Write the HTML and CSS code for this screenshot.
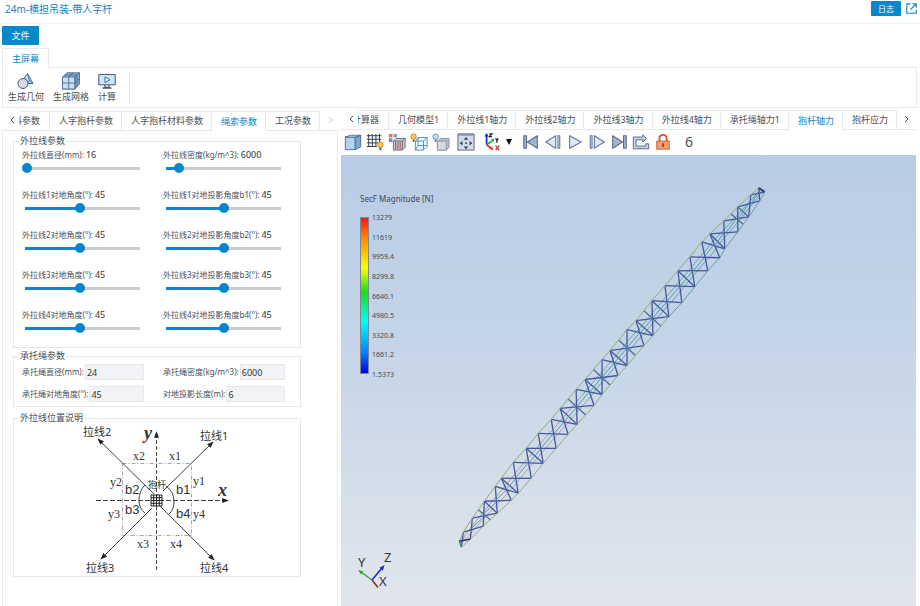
FILE: index.html
```html
<!DOCTYPE html>
<html lang="zh">
<head>
<meta charset="utf-8">
<title>24m-横担吊装-带人字杆</title>
<link rel="stylesheet" href="styles.css">
</head>
<body>
<header class="topbar">
  <h1>24m-横担吊装-带人字杆</h1>
  <button class="primary log">日志</button>
  <a class="open" href="#" aria-label="打开"><svg width="11" height="11" viewBox="0 0 11 11" fill="none" stroke="#1684c4" stroke-width="1.1"><path d="M4.500.900H.8v9.300h9.400V6.500M6.200.8h4v4M10 1 4.500 6.500"/></svg></a>
</header>

<nav class="menu"><button class="primary file">文件</button></nav>
<div class="ribbon-tabs"><button class="ribbon-tab">主屏幕</button></div>
<section class="ribbon">
  <button class="tool"><svg width="18" height="18" viewBox="0 0 18 18" stroke="#4c5666"><path d="m10.500 1.500 5.500 10H9l-2-5z" fill="#b9dcf5" stroke="#3f6e9c"/><path d="m10.500 1.500 2 7.500L16 11.500M12.500 9 9 11.500" fill="none" stroke="#3f6e9c" stroke-width=".8"/><circle cx="6" cy="11.500" r="5" fill="#d9dde3"/></svg><span>生成几何</span></button>
  <button class="tool"><svg width="20" height="18" viewBox="0 0 20 18" stroke="#4d6a8a" stroke-width=".9"><path d="M1.500 5 6 .8h12.500V12L14 17H1.500z" fill="#8eb2d4"/><path d="M1.500 5H14v12H1.500z" fill="#c7e2f6"/><path d="M1.500 11H14l4.500-4.600M7.700 17V5L12 .8M14 5 18.500.8M14 5v12M3.700 3h12.500v11.500" fill="none"/></svg><span>生成网格</span></button>
  <button class="tool"><svg width="18" height="18" viewBox="0 0 18 18" stroke="#4c5666"><path d="M.8 2.500h16.400v10.300H.8z" fill="#cfe6f7"/><path d="m7 5 5 2.700-5 2.700z" fill="#fff" stroke="#2f6698"/><path d="M7 13v2.500h4V13M4.500 16h9" fill="none" stroke-width="1.300"/></svg><span>计算</span></button>
  <i class="divider"></i>
</section>

<main class="work">
  <section class="params">
    <div class="tabs" role="tablist">
      <button class="arrow" aria-label="向左"><svg width="5" height="8" viewBox="0 0 5 8"><path d="M4 1 1 4l3 3"/></svg></button>
      <button class="tab cut" role="tab"><span>材料参数</span></button>
      <button class="tab" role="tab">人字抱杆参数</button>
      <button class="tab" role="tab">人字抱杆材料参数</button>
      <button class="tab active" role="tab" aria-selected="true">绳索参数</button>
      <button class="tab" role="tab">工况参数</button>
      <button class="arrow dim" aria-label="向右"><svg width="5" height="8" viewBox="0 0 5 8"><path d="m1 1 3 3-3 3"/></svg></button>
    </div>
    <div class="panel">
      <fieldset class="guys">
        <legend>外拉线参数</legend>
        <div class="field"><label for="d">外拉线直径(mm):</label><output for="d">16</output><input id="d" type="range" max="100" value="0" style="--fill:0%"></div>
        <div class="field"><label for="p">外拉线密度(kg/m^3):</label><output for="p">6000</output><input id="p" type="range" max="100" value="10" style="--fill:10%"></div>
        <div class="field"><label for="a1">外拉线1对地角度(°):</label><output for="a1">45</output><input id="a1" type="range" max="95" value="45" style="--fill:47%"></div>
        <div class="field"><label for="b1">外拉线1对地投影角度b1(°):</label><output for="b1">45</output><input id="b1" type="range" max="90" value="45" style="--fill:50%"></div>
        <div class="field"><label for="a2">外拉线2对地角度(°):</label><output for="a2">45</output><input id="a2" type="range" max="95" value="45" style="--fill:47%"></div>
        <div class="field"><label for="b2">外拉线2对地投影角度b2(°):</label><output for="b2">45</output><input id="b2" type="range" max="90" value="45" style="--fill:50%"></div>
        <div class="field"><label for="a3">外拉线3对地角度(°):</label><output for="a3">45</output><input id="a3" type="range" max="95" value="45" style="--fill:47%"></div>
        <div class="field"><label for="b3">外拉线3对地投影角度b3(°):</label><output for="b3">45</output><input id="b3" type="range" max="90" value="45" style="--fill:50%"></div>
        <div class="field"><label for="a4">外拉线4对地角度(°):</label><output for="a4">45</output><input id="a4" type="range" max="95" value="45" style="--fill:47%"></div>
        <div class="field"><label for="b4">外拉线4对地投影角度b4(°):</label><output for="b4">45</output><input id="b4" type="range" max="90" value="45" style="--fill:50%"></div>
      </fieldset>
      <fieldset class="slings">
        <legend>承托绳参数</legend>
        <div class="entry"><label for="s1">承托绳直径(mm):</label><input id="s1" type="text" value="24"></div>
        <div class="entry"><label for="s2">承托绳密度(kg/m^3):</label><input id="s2" type="text" value="6000"></div>
        <div class="entry"><label for="s3">承托绳对地角度(°):</label><input id="s3" type="text" value="45"></div>
        <div class="entry"><label for="s4">对地投影长度(m):</label><input id="s4" type="text" value="6"></div>
      </fieldset>
      <fieldset class="layout">
        <legend>外拉线位置说明</legend>
        <svg class="plan" viewBox="14 425 286 152">
          <defs><marker id="tip" markerUnits="userSpaceOnUse" viewBox="0 0 8 6" refX="7" refY="3" markerWidth="7" markerHeight="5" orient="auto"><path d="M0 0 8 3 0 6z" fill="#222"/></marker></defs>
          <path d="M122.500 464.500h69v72h-69z" fill="none" stroke="#8a8f95" stroke-width=".8" stroke-dasharray="4 2 1 2"/>
          <g stroke="#444" fill="none">
            <path d="M156.500 571V433" stroke-dasharray="4 2" marker-end="url(#tip)"/>
            <path d="M96 501.500h132" stroke-dasharray="5 2" marker-end="url(#tip)"/>
            <path d="m154 495-56-55" marker-end="url(#tip)"/>
            <path d="m163 492 50-49" marker-end="url(#tip)"/>
            <path d="m152 509-51 51" marker-end="url(#tip)"/>
            <path d="m160 507 54 54" marker-end="url(#tip)"/>
            <path d="M145 486q-6 6-6 15t6 13M166 487q8 6 8 15t-5 13"/>
          </g>
          <path d="M151 496h11v11h-11z" fill="#fff" stroke="#222"/>
          <path d="M153.700 496v11m2.800-11v11m2.800-11v11M151 498.700h11m-11 2.800h11m-11 2.800h11" stroke="#222"/>
          <g class="cjk"><text x="83" y="437">拉线2</text><text x="200" y="441">拉线1</text><text x="86" y="573">拉线3</text><text x="200" y="573">拉线4</text></g>
          <text class="mast" x="148" y="489">抱杆</text>
          <g class="angle"><text x="125" y="495">b2</text><text x="176" y="495">b1</text><text x="125" y="515">b3</text><text x="176" y="519">b4</text></g>
          <g class="dist"><text x="133" y="461">x2</text><text x="169" y="461">x1</text><text x="110" y="487">y2</text><text x="193" y="486">y1</text><text x="108" y="519">y3</text><text x="193" y="519">y4</text><text x="137" y="549">x3</text><text x="170" y="549">x4</text></g>
          <g class="axis"><text x="144" y="440">y</text><text x="218" y="497">x</text></g>
        </svg>
      </fieldset>
    </div>
  </section>

  <section class="viewer">
    <div class="tabs" role="tablist">
      <button class="arrow" aria-label="向左"><svg width="5" height="8" viewBox="0 0 5 8"><path d="M4 1 1 4l3 3"/></svg></button>
      <button class="tab cut" role="tab"><span>计算器</span></button>
      <button class="tab" role="tab">几何模型1</button>
      <button class="tab" role="tab">外拉线1轴力</button>
      <button class="tab" role="tab">外拉线2轴力</button>
      <button class="tab" role="tab">外拉线3轴力</button>
      <button class="tab" role="tab">外拉线4轴力</button>
      <button class="tab" role="tab">承托绳轴力1</button>
      <button class="tab active" role="tab" aria-selected="true">抱杆轴力</button>
      <button class="tab" role="tab">抱杆应力</button>
      <button class="arrow" aria-label="向右"><svg width="5" height="8" viewBox="0 0 5 8"><path d="m1 1 3 3-3 3"/></svg></button>
    </div>
    <div class="toolbar">
      <button aria-label="实体"><svg viewBox="0 0 20 20"><path d="M1.500 4.500h11v14h-11z" fill="#b5d3ee" stroke="#46688a"/><path d="m12.500 4.500 6-2v13l-6 3z" fill="#7ea8d0" stroke="#46688a"/><path d="m1.500 4.500 6-2h11l-6 2z" fill="#dcecf8" stroke="#46688a"/></svg></button>
      <button aria-label="网格"><svg viewBox="0 0 20 20"><path d="M3 1v14M7 1v14M11 1v14M15 1v9M1 3h16M1 7h16M1 11h13M1 15h11" stroke="#344252" stroke-width="1.100"/><circle cx="16" cy="13" r="3" fill="#ffc94d" stroke="#c9892b"/><path d="M14.700 16h2.600v3h-2.600z" fill="#66707c"/></svg></button>
      <button aria-label="颜色"><svg viewBox="0 0 20 20"><path d="M1 1h4v4H1z" fill="#e8754f"/><path d="M6 1h4v4H6z" fill="#7ba7d5"/><path d="M1 6h4v4H1z" fill="#6589bd"/><path d="m6 9 3-3h10v10l-3 3H6z" fill="#c9ced6" stroke="#5d6470"/><path d="M6 9h10v10M16 9l3-3" fill="none" stroke="#5d6470"/><path d="M8.500 10v8m2.500-8v8m2.500-8v8" stroke="#a95350" stroke-width="1.200"/></svg></button>
      <button aria-label="线框"><svg viewBox="0 0 20 20"><path d="m6 9 3-4h10v10l-4 4H6zM6 9h9v10M15 9l4-4M9 5v9h10M9 14l-3 5" fill="#e6f3fc" stroke="#3b8cc4" fill-opacity=".5"/><circle cx="4" cy="4" r="3" fill="#ffc94d" stroke="#c9892b"/><path d="M3 7h2v3H3z" fill="#66707c"/></svg></button>
      <button aria-label="面"><svg viewBox="0 0 20 20"><path d="m6 9 3-3h10v10l-3 3H6z" fill="#b5bcc6" stroke="#8b939f"/><path d="M6 9h10v10H6z" fill="#d5d9df" stroke="#8b939f"/><circle cx="4" cy="4" r="3" fill="#bfe3fa" stroke="#4a92c8"/><path d="M3 7h2v3H3z" fill="#66707c"/></svg></button>
      <button class="fit" aria-label="适合窗口"><svg viewBox="0 0 20 20"><path d="M1 1h18v18H1z" fill="#cfdaea" stroke="#59606c"/><path d="M1 1h18v2H1z" fill="#8691a3"/><path d="M10 4.500 7.500 7.500h5zM10 18l-2.500-3h5zM3 11.300l3-2.500v5zM17 11.300l-3-2.500v5z" fill="#2e3e55"/><circle cx="10" cy="11.300" r="1" fill="#2e3e55"/></svg></button>
      <button class="view" aria-label="视图方向"><svg viewBox="0 0 20 20"><path d="M4 13V3" stroke="#1736c8" stroke-width="2"/><path d="m4 13 7-5" stroke="#26b24a" stroke-width="2"/><path d="m4 13 5 4" stroke="#e03328" stroke-width="2"/><path d="M1.500 4 4 0l2.500 4z" fill="#1736c8"/><path d="m9 7 4-.8-1.700 4z" fill="#26b24a"/><path d="m7.600 18 4 .8-1.600-4z" fill="#e03328"/><path d="M7 1h3L7 4h3M14 6l1.500 2.500V11m0-2.500L17 6" fill="none" stroke="#222" stroke-width="1.300"/><path d="m14 14 4 5m0-5-4 5" stroke="#c22b22" stroke-width="1.300"/></svg></button>
      <button class="caret" aria-label="更多视图"><svg viewBox="0 0 8 8"><path d="M1 1h6L4 7z" fill="#111"/></svg></button>
      <button aria-label="首帧"><svg viewBox="0 0 20 20"><path d="M2 3h3v14H2zM17 3v14L6 10z" fill="#a7b3cb" stroke="#5c6b8c" stroke-width="1.200"/></svg></button>
      <button aria-label="上一帧"><svg viewBox="0 0 20 20"><path d="M13 3v14L2 10zM15.500 3h2v14h-2z" fill="#dfe7f3" stroke="#6577a0" stroke-width="1.200"/></svg></button>
      <button aria-label="播放"><svg viewBox="0 0 20 20"><path d="m4 3 13 7-13 7z" fill="#dfe7f3" stroke="#6577a0" stroke-width="1.200"/></svg></button>
      <button aria-label="下一帧"><svg viewBox="0 0 20 20"><path d="m7 3 11 7-11 7zM2.500 3h2v14h-2z" fill="#dfe7f3" stroke="#6577a0" stroke-width="1.200"/></svg></button>
      <button aria-label="末帧"><svg viewBox="0 0 20 20"><path d="M15 3h3v14h-3zM3 3v14l11-7z" fill="#a7b3cb" stroke="#5c6b8c" stroke-width="1.200"/></svg></button>
      <button aria-label="循环"><svg viewBox="0 0 20 20"><path d="M1.500 17.500v-13H12V2l4 4-4 4V7.500H4.500v7h11V12h3v5.500z" fill="#c9d5e8" stroke="#596b94" stroke-width="1.100"/></svg></button>
      <button aria-label="锁定"><svg viewBox="0 0 20 20"><path d="M6 9V6q0-4 4-4t4 4v3" fill="none" stroke="#c95a2c" stroke-width="2"/><path d="M3 9h14v9H3z" fill="#f3a070" stroke="#c95a2c"/><path d="M10 11.500v4" stroke="#a53f18" stroke-width="2"/></svg></button>
      <span class="frame">6</span>
    </div>
    <div class="scene">
      <svg class="model" id="model" viewBox="341 154 575 452" preserveAspectRatio="xMidYMid meet" fill="none"></svg>
      <div class="scale">
        <h2>SecF Magnitude [N]</h2>
        <div class="scale-body">
          <i class="ramp"></i>
          <ul><li>13279</li><li>11619</li><li>9959.4</li><li>8299.8</li><li>6640.1</li><li>4980.5</li><li>3320.8</li><li>1661.2</li><li>1.5373</li></ul>
        </div>
      </div>
      <svg class="triad" width="44" height="50" viewBox="354 542 44 50">
        <path d="m372 580 10-12" stroke="#1a2bd0" stroke-width="1.600"/><path d="m384.500 565-5 2.800 3.400 2.800z" fill="#1a2bd0"/>
        <path d="m372 580-11-8" stroke="#2fa83f" stroke-width="1.400"/><path d="m358 570 5.500 1.200-2.500 3.300z" fill="#2fa83f"/>
        <path d="m372 580 6 7.500" stroke="#8c2f2a" stroke-width="1.600"/>
        <text x="358" y="567">Y</text><text x="384" y="562">Z</text><text x="379" y="586">X</text>
      </svg>
    </div>
  </section>
</main>
<script src="model.js"></script>
</body>
</html>
```
FILE: styles.css
```css
* { box-sizing: border-box; }
body {
  margin: 0;
  min-height: 100vh;
  display: flex;
  flex-direction: column;
  background: #fff;
  color: #4a4f57;
  font: 9px/12px "Noto Sans", "Noto Sans CJK SC", sans-serif;
}
button, input { font: inherit; color: inherit; }
button { border: 0; padding: 0; background: none; white-space: nowrap; }
h1, h2, ul { margin: 0; padding: 0; font-weight: 400; list-style: none; }

.topbar {
  display: flex;
  align-items: center;
  gap: 5px;
  height: 24px;
  padding: 0 3px 6px 5px;
  border-bottom: 1px solid #eef0f2;
}
.topbar h1 { flex: 1; color: #1684c4; font-size: 10px; }
.primary { background: #0a86cc; color: #fff; border-radius: 1px; }
.log { width: 30px; height: 15px; font-size: 8px; }
.open { display: flex; }
.menu { padding: 2px 2px 3px; }
.file { display: block; width: 37px; height: 19px; }
.ribbon-tabs { display: flex; padding-left: 2px; }
.ribbon-tab {
  width: 47px;
  height: 20px;
  margin-bottom: -1px;
  border: 1px solid #e8ebee;
  border-bottom: 0;
  background: #fff;
  color: #0a86cc;
  z-index: 1;
}
.ribbon {
  display: flex;
  gap: 9px;
  height: 41px;
  margin: 0 3px 0 2px;
  padding: 4px 4px 3px 5px;
  border: 1px solid #e8ebee;
}
.tool { display: flex; flex-direction: column; align-items: center; gap: 1px; }
.divider { width: 1px; margin-left: 4px; background: #e8ebee; }

.work { flex: 1; display: flex; margin-right: 4px; }
.params { flex: 0 0 336px; display: flex; flex-direction: column; margin: 3px 0 0 2px; }
.viewer { flex: 1; min-width: 0; display: flex; flex-direction: column; margin: 2px 0 0 3px; }

.tabs { display: flex; height: 20px; border-bottom: 1px solid #e4e7ea; }
.tab { padding: 0 8px 0 9px; border: solid #e8ebee; border-width: 1px 1px 0 0; }
.tab.active { margin-bottom: -1px; background: #fff; color: #0a86cc; }
.tab.cut { width: 31px; padding: 0 9px 0 0; }
.cut span { display: flex; justify-content: flex-end; overflow: hidden; }
.arrow { width: 17px; padding-left: 3px; }
.arrow path { fill: none; stroke: #4a4f57; }
.dim path { stroke: #c8ccd2; }

.panel { flex: 1; border: solid #e8ebee; border-width: 0 1px; padding: 4px 36px 0 10px; }
fieldset { min-width: 0; margin: 0 0 2px; padding: 2px 8px 4px; border: 1px solid #e6e8eb; }
legend { margin-left: -3px; padding: 0 1px; }
.guys, .slings { display: grid; grid-template-columns: 122px 122px; column-gap: 19px; }
.guys { row-gap: 14px; padding-bottom: 12px; }
.slings { row-gap: 6px; margin-bottom: 5px; }
.field { display: flex; flex-wrap: wrap; }
label { font-size: 8px; white-space: nowrap; }
output { margin-left: 2px; color: #333; }
.field input {
  appearance: none;
  width: 121px;
  height: 14px;
  margin: 0;
  background: linear-gradient(90deg, #0a86cc var(--fill), #c9cbce var(--fill)) center / 115px 3px no-repeat;
}
.field input::-webkit-slider-thumb {
  appearance: none;
  width: 10px;
  height: 10px;
  border-radius: 50%;
  background: #0a86cc;
}
.entry { display: flex; align-items: center; gap: 1px; height: 16px; }
.entry input {
  flex: 1;
  min-width: 0;
  height: 16px;
  padding: 0 1px;
  border: 1px solid #e6e8ec;
  background: #f2f3f6;
  color: #333;
}
.layout { padding: 0; }
.layout legend { margin-left: 5px; }
.plan { display: block; width: 100%; }
.plan text { fill: #333; }
.plan .cjk { font-size: 11px; }
.plan .mast { font-size: 9px; }
.plan .angle { font: 13px "Liberation Sans", sans-serif; }
.plan .dist { font: 12px "Liberation Serif", serif; }
.plan .axis { font: italic bold 18px "Liberation Serif", serif; }

.toolbar { display: flex; align-items: center; height: 25px; padding: 0 2px 2px 1px; }
.toolbar button { width: 22px; height: 22px; }
.toolbar svg { display: block; width: 18px; height: 18px; margin: auto; }
.toolbar .fit { margin: 0 4px 0 3px; }
.toolbar .caret { width: 12px; margin-right: 5px; }
.toolbar .caret svg { width: 8px; height: 8px; }
.frame { margin-left: 11px; font-size: 14px; }

.scene {
  position: relative;
  flex: 1;
  background: linear-gradient(#b8cce5, #c8d7e8 50%, #e2e6ec);
}
.model { position: absolute; inset: 0; width: 100%; height: 100%; }
.scale { position: absolute; left: 19px; top: 38px; color: #3f4854; }
.scale h2 { font-size: 8px; line-height: 12px; }
.scale-body { display: flex; gap: 3px; margin-top: 8px; }
.ramp {
  width: 9px;
  height: 157px;
  margin-top: 4px;
  border: 1px solid #7a8797;
  background: linear-gradient(#f11 0%, #ff8a00 13%, #ff0 32%, #1bdc1b 48%, #0ff 67%, #0a7dff 87%, #00d 100%);
}
.scale ul { display: flex; flex-direction: column; justify-content: space-between; height: 167px; font-size: 7px; line-height: 10px; }
.triad { position: absolute; left: 13px; bottom: 14px; }
.triad text { font-size: 13px; fill: #333; }
```
FILE: model.js
```js
// Panel points of the lattice mast along its two outer chords, foot to head.
const left = [[459,541],[463,532],[472,518],[484,501],[495,486],[501,478],[513,462],[526,448],[538,433],[551,419],[560,408],[576,389],[585,379],[602,359],[610,350],[627,329],[636,320],[652,300],[665,285],[678,270],[690,256],[702,241],[710,233],[724,220],[738,206],[751,194],[759,187]];
const right = [[461,547],[470,539],[483,526],[497,513],[511,500],[518,493],[531,478],[543,463],[556,448],[568,434],[577,424],[594,405],[602,394],[618,375],[627,365],[644,345],[653,335],[669,316],[682,302],[695,286],[708,270],[720,257],[725,248],[738,231],[749,216],[760,200],[765,191]];

const svg = document.getElementById("model");
function stroke(points, color, width) {
  const line = document.createElementNS("http://www.w3.org/2000/svg", "polyline");
  line.setAttribute("points", points.join(" "));
  line.setAttribute("stroke", color);
  line.setAttribute("stroke-width", width);
  svg.append(line);
}
const between = (a, b, t) => [a[0] + (b[0] - a[0]) * t, a[1] + (b[1] - a[1]) * t];

const inner = t => left.map((p, i) => between(p, right[i], t));
stroke(inner(0.35).slice(0, 12), "#b09a92", 1);
stroke(inner(0.65).slice(0, 12), "#a8a694", 1);
stroke(inner(0.35).slice(11), "#72a58f", 1);
stroke(inner(0.65).slice(11), "#6ba39f", 1);

const last = left.length - 1;
const braced = new Set([3, 5, 7, 10, 12, 14, 16, 17, 19, 22, 24]);
left.forEach((p, i) => {
  if (i < last) stroke([p, right[i + 1]], "#4457a0", 1.3);
  if (i > 0) stroke([p, right[i - 1]], "#4457a0", 1.3);
  if (braced.has(i)) stroke([p, right[i]], "#4358a0", 1.3);
  if (i > 1 && i < last) {
    const a = between(p, right[i - 1], 0.5);
    const b = between(p, right[i + 1], 0.5);
    stroke([a, b], "#4c9ab0", 1);
  }
});
[[10, 11], [12, 13], [14, 15], [16, 17], [2, 3], [23, 24]].forEach(([i, j]) => {
  stroke([between(left[i], left[j], 0.5), between(right[i], right[j], 0.5)], "#4a6f9c", 1.3);
});
stroke(left, "#8dae74", 1);
stroke(right.slice(0, 18), "#8dae7c", 1);
stroke(right.slice(17), "#64a0a0", 1);
stroke([left[0], right[0]], "#4c8f72", 1.5);
stroke([left[0], right[1]], "#3a3050", 1.2);
stroke([left[last], right[last]], "#38406c", 2);
```
